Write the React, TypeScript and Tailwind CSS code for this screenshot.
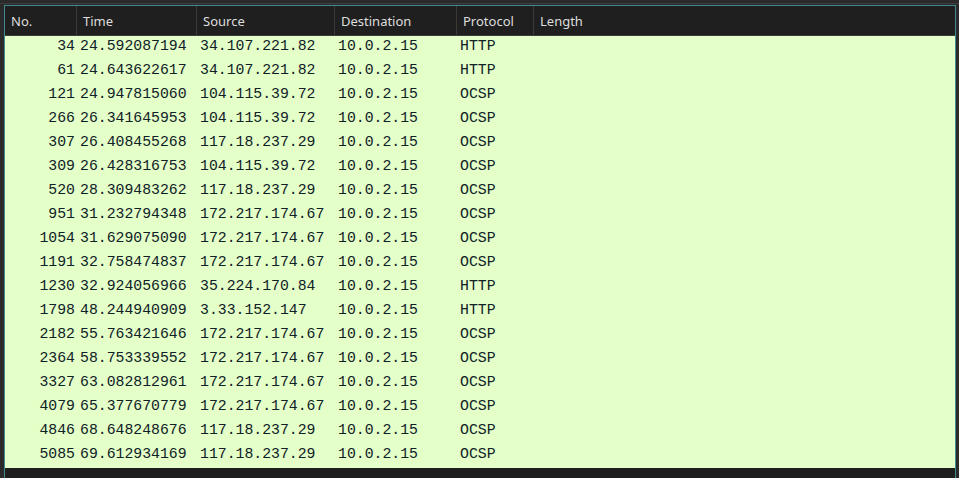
import React from "react";

const rows: [string, string, string, string, string][] = [
  ["34", "24.592087194", "34.107.221.82", "10.0.2.15", "HTTP"],
  ["61", "24.643622617", "34.107.221.82", "10.0.2.15", "HTTP"],
  ["121", "24.947815060", "104.115.39.72", "10.0.2.15", "OCSP"],
  ["266", "26.341645953", "104.115.39.72", "10.0.2.15", "OCSP"],
  ["307", "26.408455268", "117.18.237.29", "10.0.2.15", "OCSP"],
  ["309", "26.428316753", "104.115.39.72", "10.0.2.15", "OCSP"],
  ["520", "28.309483262", "117.18.237.29", "10.0.2.15", "OCSP"],
  ["951", "31.232794348", "172.217.174.67", "10.0.2.15", "OCSP"],
  ["1054", "31.629075090", "172.217.174.67", "10.0.2.15", "OCSP"],
  ["1191", "32.758474837", "172.217.174.67", "10.0.2.15", "OCSP"],
  ["1230", "32.924056966", "35.224.170.84", "10.0.2.15", "HTTP"],
  ["1798", "48.244940909", "3.33.152.147", "10.0.2.15", "HTTP"],
  ["2182", "55.763421646", "172.217.174.67", "10.0.2.15", "OCSP"],
  ["2364", "58.753339552", "172.217.174.67", "10.0.2.15", "OCSP"],
  ["3327", "63.082812961", "172.217.174.67", "10.0.2.15", "OCSP"],
  ["4079", "65.377670779", "172.217.174.67", "10.0.2.15", "OCSP"],
  ["4846", "68.648248676", "117.18.237.29", "10.0.2.15", "OCSP"],
  ["5085", "69.612934169", "117.18.237.29", "10.0.2.15", "OCSP"],
];

const headers = [
  { label: "No.", w: "w-[72px]" },
  { label: "Time", w: "w-[120px]" },
  { label: "Source", w: "w-[138px]" },
  { label: "Destination", w: "w-[122px]" },
  { label: "Protocol", w: "w-[77px]" },
];

export default function App() {
  return (
    <div className="w-[959px] h-[478px] bg-[#2a2a2a] overflow-hidden flex flex-col">
      <div className="h-[3px] shrink-0" />
      <div className="h-px shrink-0 bg-[#3e3e3e]" />
      <div className="h-px shrink-0" />
      <div className="ml-[4px] w-[952px] flex-1 flex flex-col border-l border-t border-r border-[#3f8c8f] bg-[#1e1e1e] overflow-hidden">
        <div
          className="h-[30px] shrink-0 flex bg-[#1f1f1f] border-b border-[#3a3a3a] text-[13px] text-[#dedede]"
          style={{ fontFamily: '"Noto Sans", sans-serif' }}
        >
          {headers.map((h) => (
            <div
              key={h.label}
              className={`${h.w} shrink-0 border-r border-[#3a3a3a] pl-[6px] pt-[2px] flex items-center`}
            >
              {h.label}
            </div>
          ))}
          <div className="flex-1 pl-[6px] pt-[2px] flex items-center">Length</div>
        </div>
        <div
          className="bg-[#e4ffc7] text-[#0f2127] text-[14.8px]"
          style={{ fontFamily: '"Liberation Mono", monospace' }}
        >
          {rows.map((r) => (
            <div key={r[0]} className="h-[24px] flex items-center pb-[4px] leading-[20px] whitespace-pre">
              <div className="w-[72px] shrink-0 text-right pr-[2px]">{r[0]}</div>
              <div className="w-[120px] shrink-0 pl-[3px]">{r[1]}</div>
              <div className="w-[138px] shrink-0 pl-[3px]">{r[2]}</div>
              <div className="w-[122px] shrink-0 pl-[3px]">{r[3]}</div>
              <div className="w-[77px] shrink-0 pl-[3px]">{r[4]}</div>
              <div className="flex-1" />
            </div>
          ))}
        </div>
      </div>
    </div>
  );
}
